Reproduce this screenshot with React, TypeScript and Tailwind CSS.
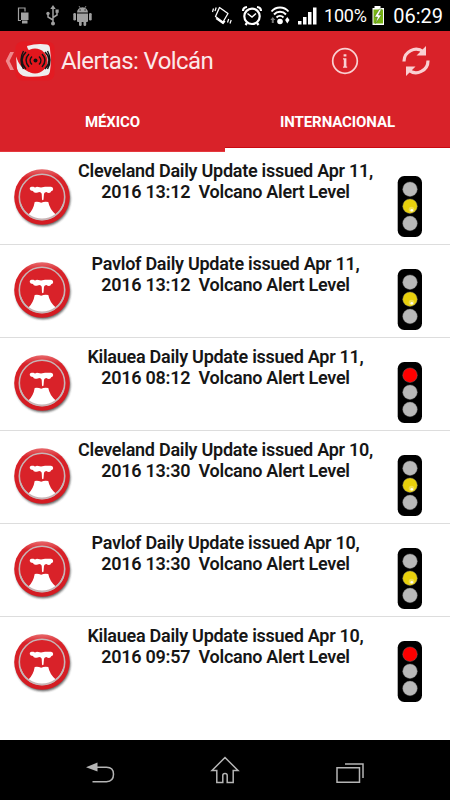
type Level = 'yellow' | 'red';

const alerts: { title: string; detail: string; level: Level }[] = [
  { title: 'Cleveland Daily Update issued Apr 11,', detail: '2016 13:12  Volcano Alert Level', level: 'yellow' },
  { title: 'Pavlof Daily Update issued Apr 11,', detail: '2016 13:12  Volcano Alert Level', level: 'yellow' },
  { title: 'Kilauea Daily Update issued Apr 11,', detail: '2016 08:12  Volcano Alert Level', level: 'red' },
  { title: 'Cleveland Daily Update issued Apr 10,', detail: '2016 13:30  Volcano Alert Level', level: 'yellow' },
  { title: 'Pavlof Daily Update issued Apr 10,', detail: '2016 13:30  Volcano Alert Level', level: 'yellow' },
  { title: 'Kilauea Daily Update issued Apr 10,', detail: '2016 09:57  Volcano Alert Level', level: 'red' },
];

/* ── Status bar ── */
function StatusBar() {
  return (
    <div className="flex h-[31px] shrink-0 items-center bg-black text-white">
      <svg className="ml-4 h-[31px] w-20 shrink-0" viewBox="16 0 80 31" fill="none">
        <path d="M21 20.500h-2.500v-12.500h6.500v3.500" stroke="#a0a0a0" strokeWidth="1.200" />
        <path d="M21 12.500h7.500v7.500h-7.500zM22 20.500h5.500v3h-5.500z" fill="#a0a0a0" />
        <g stroke="#a0a0a0" strokeWidth="1.500">
          <path d="M53 8v15M53 20l-5-3v-4M53 17.500l4-2.500v-3.500" />
        </g>
        <path d="M53 5l2.700 4h-5.400zM55.500 9.500h3.200v3.200h-3.200z" fill="#a0a0a0" />
        <circle cx="48" cy="13.500" r="1.700" fill="#a0a0a0" />
        <circle cx="53" cy="23.500" r="2" fill="#a0a0a0" />
        <g fill="#a0a0a0">
          <path d="M77 12.500a5.500 5.200 0 0 1 11 0zM77 13.500h11v7.500q0 1-1 1h-9q-1 0-1-1z" />
          <rect x="73.300" y="13" width="2.700" height="7.500" rx="1.300" />
          <rect x="89" y="13" width="2.700" height="7.500" rx="1.300" />
          <rect x="79" y="20" width="2.700" height="6" rx="1.300" />
          <rect x="83.500" y="20" width="2.700" height="6" rx="1.300" />
        </g>
        <path d="M79 6l1.500 2.500M86 6l-1.500 2.500" stroke="#a0a0a0" strokeWidth=".8" />
        <path d="M79.500 10h1.200M84.500 10h1.200" stroke="#000" strokeWidth="1" />
      </svg>
      <svg className="ml-auto h-[31px] w-[110px] shrink-0" viewBox="210 0 110 31" fill="none" stroke="#fff">
        <path d="M219.500 7.500l8.500 6-5 8.500-7.500-5.500zM216 18.500l7 5 2-2.500" strokeWidth="1.300" strokeLinejoin="round" />
        <path d="M212.500 12l1-3.500M215 11l1.200-3.500M227.500 22.500l1.200-3.500M230 23.500l1.200-3.500" strokeWidth="1.200" />
        <circle cx="252" cy="16.300" r="7.700" strokeWidth="2.200" />
        <path d="M247.500 13.500l4.500 3.500 4-3.500" strokeWidth="1.500" />
        <path d="M243 11q0-3.500 4-4M261 11q0-3.500-4-4M247 23l-1.500 2M257 23l1.500 2" strokeWidth="2.200" />
        <path d="M271.500 11.500a11 11 0 0 1 17 0M274 14.500a8 8 0 0 1 12 0M276.500 17.500a5 5 0 0 1 7 0" strokeWidth="1.900" />
        <circle cx="280" cy="21.500" r="2.800" fill="#fff" stroke="none" />
        <path d="M272.800 17l2.500 3h-1.500v3h-2v-3h-1.500z" fill="#777" stroke="none" />
        <path d="M287.300 17l2.200 3-2.200 3.500-2.200-3.500z" fill="#fff" stroke="none" />
        <path d="M298 21h3.500v3.500h-3.500zM303 17h3.500v7.500h-3.500zM308 12h3.500v12.500h-3.500zM313 7.500h3.500v17h-3.500z" fill="#fff" stroke="none" />
      </svg>
      <span className="ml-[4px] w-[43px] whitespace-nowrap text-[18px] leading-none tracking-[-0.2px]">100%</span>
      <svg className="ml-[3px] h-[31px] w-4 shrink-0" viewBox="370 0 16 31">
        <path d="M374.500 8V6h6v2h3.500v17h-11.500V8z" fill="#fff" />
        <path d="M373.500 9.500h9.500v14h-9.500z" fill="#77b414" />
        <path d="M379.500 9l-5 8h3l-2 6.500 6-8.500h-3l3-6z" fill="#fff" stroke="#3d6d08" strokeWidth=".5" />
      </svg>
      <span className="mr-[7px] ml-[6px] w-[51px] whitespace-nowrap text-right text-[20px] leading-none">06:29</span>
    </div>
  );
}

function AppLogo() {
  return (
    <svg className="h-[60px] w-[52px] shrink-0" viewBox="5 31 52 60" fill="none">
      <path d="M14 52h-3.800l-4.500 9 4.500 9h3.800l-4.500-9z" fill="#f0888c" />
      <rect x="15.500" y="41.500" width="39" height="39" rx="7" fill="#e31b22" />
      <path d="M27 46q10-3 20-1.500 3 .5 3 4.500 1.500 12 0 22-.5 4-4 4.500-10 2-20 1-7-1-9-8l-1-12q4 12 12 15 10 3 15-5 5-9-1-14-6-5-13-2-2-2-2-4.500z" fill="#eee" />
      <circle cx="35" cy="61" r="12.500" fill="#e3161d" />
      <circle cx="35.500" cy="60.500" r="2" fill="#111" />
      <g stroke="#151515" strokeWidth="1.400">
        <path d="M32 56.500q-4 4 0 8M29 54q-6 6 0 13M26 52q-8 8 0 17M23.500 51q-5 9 0 18" />
        <path d="M39 56.500q4 4 0 8M42 54q6 6 0 13M45 52q8 8 0 17M47.500 51q5 9 0 18" />
      </g>
    </svg>
  );
}

/* ── Action bar and tabs ── */
function Header() {
  return (
    <header className="shrink-0 bg-[#d92229] text-white">
      <div className="flex h-[60px] items-center pl-[5px] pr-[19px]">
        <AppLogo />
        <h1 className="ml-1 text-[24px] leading-none tracking-[-0.6px] text-[#fbe9ea]">Alertas: Volcán</h1>
        <svg className="ml-auto h-7 w-7" viewBox="0 0 28 28" fill="none">
          <circle cx="14" cy="14" r="12.300" stroke="#f9d0d2" strokeWidth="1.700" />
          <path d="M12.600 7.200h2.800v2.300h-2.800zM12 11.200h3.400v8.300h.8v1.200h-4.200v-1.200h.8v-7.100h-.8z" fill="#f9d0d2" />
        </svg>
        <svg className="ml-[42px] h-[30px] w-[30px]" viewBox="0 0 30 30" fill="none">
          <path d="M3 15.500a12 12 0 0 1 19.500-9.500M27 14.500a12 12 0 0 1-19.500 9.500" stroke="#f9d0d2" strokeWidth="3.200" />
          <path d="M25 0v9.500h-9.500zM5 30v-9.500h9.500z" fill="#f9d0d2" />
        </svg>
      </div>
      <div className="flex h-[61px] text-[15px] font-bold leading-[62px]">
        <div className="w-1/2 border-b border-[#e5383e] text-center tracking-[-0.1px]">MÉXICO</div>
        <div className="w-1/2 border-b-4 border-white text-center tracking-[-0.1px] shadow-[inset_0_-1px_#c90911]">INTERNACIONAL</div>
      </div>
    </header>
  );
}

/* ── Alert list ── */
function VolcanoBadge() {
  return (
    <svg className="ml-2.5 mt-[13px] h-16 w-16 shrink-0" viewBox="0 0 64 64" fill="none">
      <defs>
        <linearGradient id="badge" x1="0" y1="0" x2="0" y2="1">
          <stop offset="0" stopColor="#e8696c" />
          <stop offset=".16" stopColor="#d92229" />
          <stop offset="1" stopColor="#d31b22" />
        </linearGradient>
        <filter id="shade" x="-20%" y="-20%" width="140%" height="140%">
          <feGaussianBlur stdDeviation="1.200" />
        </filter>
      </defs>
      <circle cx="33" cy="33.800" r="27.500" fill="#333" opacity=".75" filter="url(#shade)" />
      <circle cx="32" cy="32" r="27.800" fill="url(#badge)" />
      <circle cx="32" cy="32" r="22.700" fill="#d92229" stroke="#c7b5b6" strokeWidth="1.600" />
      <path d="M19.500 21.700h4l1.500.7 2-.7 4 .9 4-.9h6q2.200.3 2.200 2.300 0 1.700-2 2.300-.5 1.600-2.200 1.600-1.500 0-2.500-1-2 .2-2.500 1.800l-.5 5.800q-.7 1.500-1.500 0l-.3-5.800q-.5-1.500-2.500-1.700-1.500 1-3.200.8-2.500.3-3-1.700-2.800-.2-3.300-2.200-.3-1.700 1.800-2.200z" fill="#fff" />
      <path d="M24.700 37q3.300-.7 6.500.8 3.300-1.700 7.100-.8 1.200 7 7.500 12.500-5 5-13.600 5t-13.700-5q5-5 6.200-12.500z" fill="#fff" />
      <path d="M10.500 39a22.700 22.700 0 0 0 43 0" stroke="#c7b5b6" strokeWidth="1.600" />
    </svg>
  );
}

function TrafficLight({ level }: { level: Level }) {
  return (
    <svg className="ml-[20px] mt-6 h-[61px] w-[26px] shrink-0" viewBox="0 0 26 61">
      <rect x=".700" y="0" width="24.300" height="61" rx="6.500" fill="#000" />
      <circle cx="13" cy="13.200" r="7.300" fill={level === 'red' ? '#fe0000' : '#b9b9b9'} stroke="#777" strokeWidth=".4" />
      <circle cx="13" cy="30.200" r="7.300" fill={level === 'yellow' ? '#e8d00c' : '#b9b9b9'} stroke="#777" strokeWidth=".4" />
      {level === 'yellow' && (
        <>
          <circle cx="14.500" cy="33.500" r="2.800" fill="#f0de50" />
          <circle cx="14.800" cy="34.200" r="1.300" fill="#fffef0" />
        </>
      )}
      <circle cx="13" cy="47.400" r="7.300" fill="#b9b9b9" stroke="#777" strokeWidth=".4" />
    </svg>
  );
}

function AlertList() {
  return (
    <ul className="flex-1 bg-white">
      {alerts.map((alert) => (
        <li key={alert.title} className="flex h-[93.100px] items-start border-b border-[#dddddd] last:border-b-0">
          <VolcanoBadge />
          <p className="w-[303px] shrink-0 whitespace-pre pt-2 text-center text-[18px] font-semibold leading-[21px] tracking-[-0.27px] text-[#161616]">
            {alert.title}
            <br />
            {alert.detail}
          </p>
          <TrafficLight level={alert.level} />
        </li>
      ))}
    </ul>
  );
}

/* ── System navigation ── */
function NavBar() {
  return (
    <nav className="flex h-[60px] shrink-0 items-center justify-between bg-black px-[85px]">
      <svg className="h-[30px] w-[30px]" viewBox="85 756 30 30" fill="none" stroke="#b5b5b5" strokeWidth="1.500">
        <path d="M97 768.200h9.500q7 0 7 7t-7 7.500h-14" />
        <path d="M86 768.200l11.500-4.700v9z" fill="#b5b5b5" stroke="none" />
      </svg>
      <svg className="h-[30px] w-[30px]" viewBox="210 755 30 30" fill="none" stroke="#b5b5b5" strokeWidth="1.500">
        <path d="M225 757.500l-13 13h4.800v12h6v-7q0-2 2.200-2t2.200 2v7h6v-12h4.800z" />
      </svg>
      <svg className="h-[30px] w-[30px]" viewBox="335 755 30 30" fill="none" stroke="#b5b5b5" strokeWidth="1.500">
        <path d="M337 767.700h22.500v14.500h-22.500zM345 764h18v14" />
      </svg>
    </nav>
  );
}

export default function App() {
  return (
    <div className="flex h-[800px] w-[450px] flex-col overflow-hidden bg-white font-['Roboto',sans-serif]">
      <StatusBar />
      <Header />
      <AlertList />
      <NavBar />
    </div>
  );
}
